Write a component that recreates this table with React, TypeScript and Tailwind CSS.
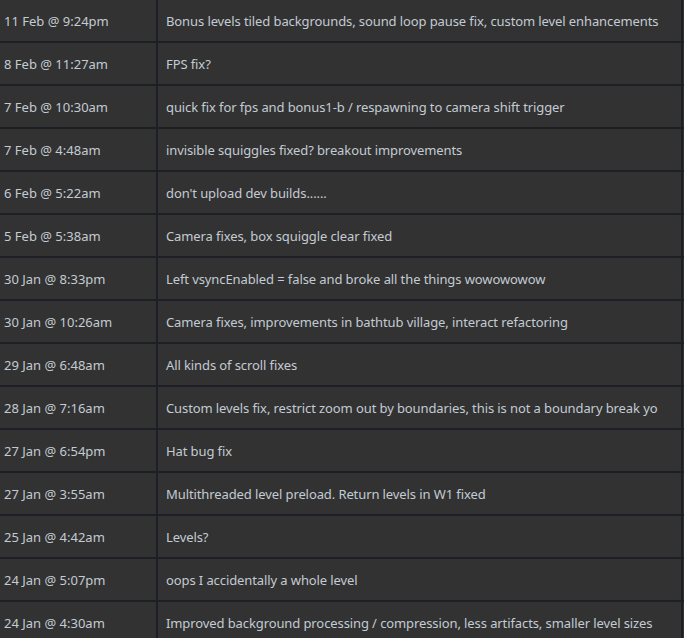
import React from "react";

const rows: [string, string][] = [
  ["11 Feb @ 9:24pm", "Bonus levels tiled backgrounds, sound loop pause fix, custom level enhancements"],
  ["8 Feb @ 11:27am", "FPS fix?"],
  ["7 Feb @ 10:30am", "quick fix for fps and bonus1-b / respawning to camera shift trigger"],
  ["7 Feb @ 4:48am", "invisible squiggles fixed? breakout improvements"],
  ["6 Feb @ 5:22am", "don't upload dev builds......"],
  ["5 Feb @ 5:38am", "Camera fixes, box squiggle clear fixed"],
  ["30 Jan @ 8:33pm", "Left vsyncEnabled = false and broke all the things wowowowow"],
  ["30 Jan @ 10:26am", "Camera fixes, improvements in bathtub village, interact refactoring"],
  ["29 Jan @ 6:48am", "All kinds of scroll fixes"],
  ["28 Jan @ 7:16am", "Custom levels fix, restrict zoom out by boundaries, this is not a boundary break yo"],
  ["27 Jan @ 6:54pm", "Hat bug fix"],
  ["27 Jan @ 3:55am", "Multithreaded level preload. Return levels in W1 fixed"],
  ["25 Jan @ 4:42am", "Levels?"],
  ["24 Jan @ 5:07pm", "oops I accidentally a whole level"],
  ["24 Jan @ 4:30am", "Improved background processing / compression, less artifacts, smaller level sizes"],
];

export default function App() {
  return (
    <div className="w-[684px] h-[638px] overflow-hidden bg-[#1c1f24]">
      <div
        className="grid grid-cols-[156px_523px_1px] gap-[2px] text-[13px] text-[#c3cbd3]"
        style={{ fontFamily: '"Noto Sans", "Open Sans", Arial, sans-serif' }}
      >
        {rows.map(([d, t], i) => (
          <React.Fragment key={i}>
            <div className="h-[41px] bg-[#323232] flex items-center pt-[2px] pl-[4px] whitespace-nowrap">{d}</div>
            <div className="h-[41px] bg-[#323232] flex items-center pt-[2px] pl-[8px] whitespace-nowrap tracking-[-0.1px]">{t}</div>
            <div className="h-[41px] bg-[#323232]" />
          </React.Fragment>
        ))}
      </div>
    </div>
  );
}
